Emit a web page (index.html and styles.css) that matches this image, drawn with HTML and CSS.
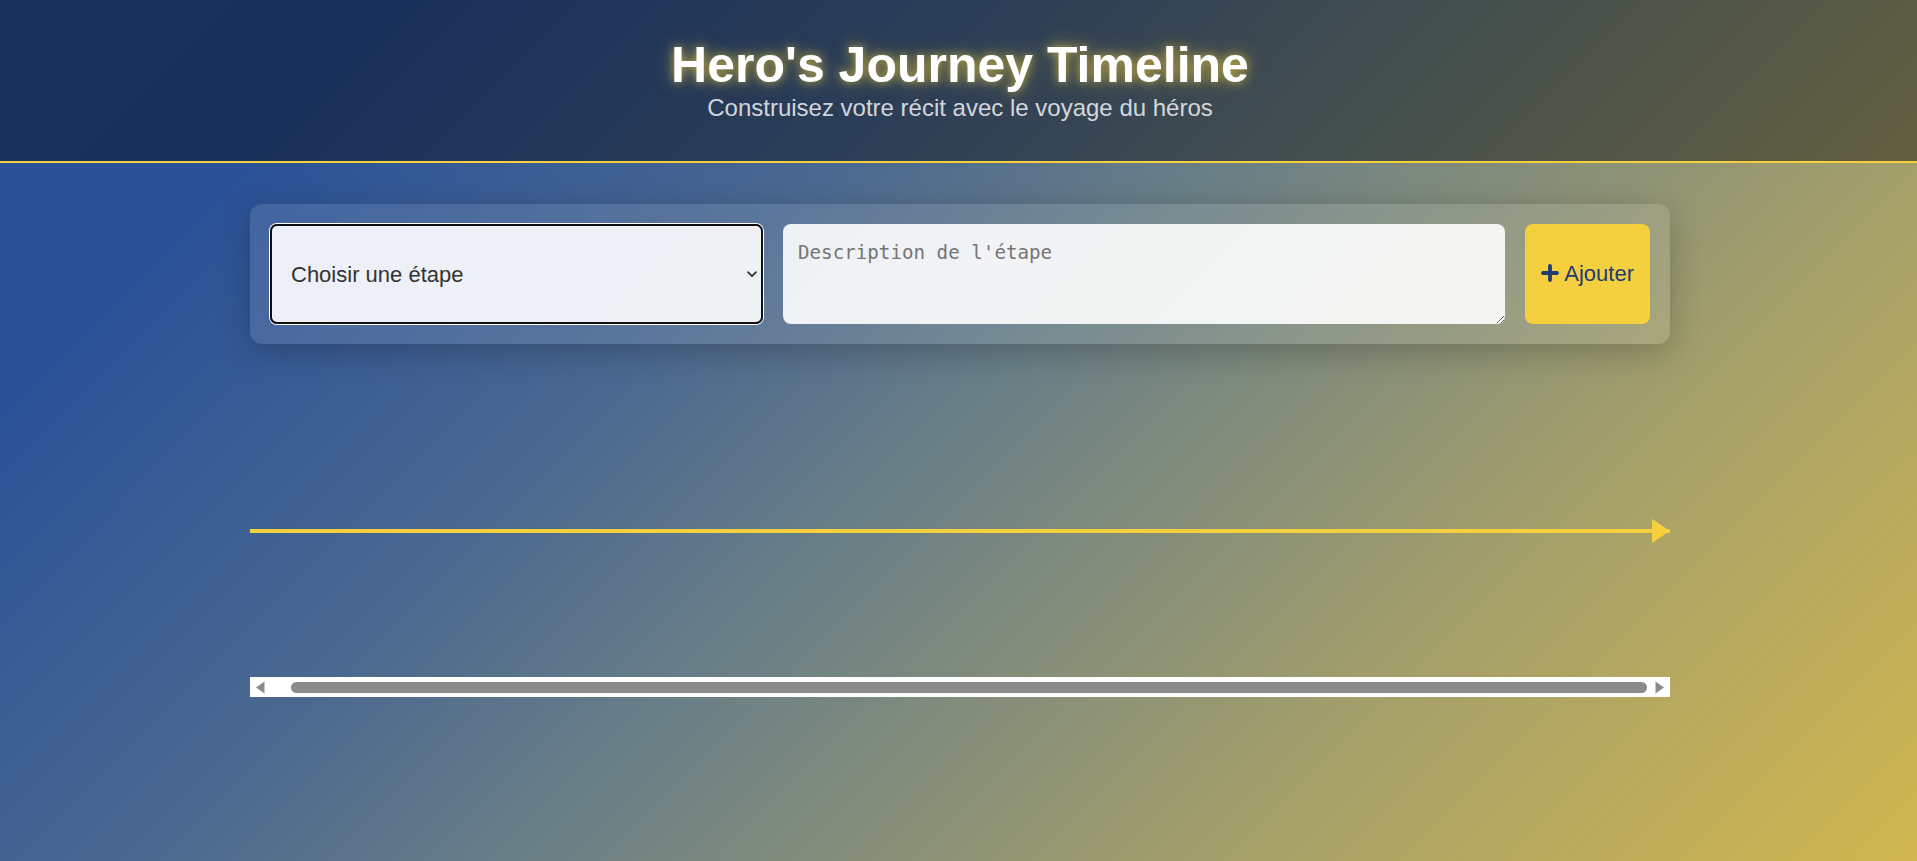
FILE: index.html
```html
<!DOCTYPE html>
<html lang="fr">
<head>
<meta charset="utf-8">
<title>Hero's Journey Timeline</title>
<link rel="stylesheet" href="styles.css">
</head>
<body>
<header class="hero-header">
  <h1 class="title">Hero's Journey Timeline</h1>
  <p class="subtitle">Construisez votre récit avec le voyage du héros</p>
</header>
<main class="container">
  <section class="stage-form">
    <div class="select-wrap">
      <select class="stage-select">
        <option>Choisir une étape</option>
        <option>Le monde ordinaire</option>
        <option>L'appel à l'aventure</option>
        <option>Le refus de l'appel</option>
        <option>La rencontre du mentor</option>
        <option>Le passage du seuil</option>
        <option>Épreuves, alliés et ennemis</option>
        <option>L'approche de la caverne</option>
        <option>L'épreuve suprême</option>
        <option>La récompense</option>
        <option>Le chemin du retour</option>
        <option>La résurrection</option>
        <option>Le retour avec l'élixir</option>
      </select>
      <svg class="select-chevron" width="10" height="7" viewBox="0 0 10 7" aria-hidden="true"><path d="M1 1.2l4 4 4-4" fill="none" stroke="#333" stroke-width="1.8" stroke-linecap="round" stroke-linejoin="round"/></svg>
    </div>
    <textarea class="stage-desc" placeholder="Description de l'étape"></textarea>
    <button class="add-btn" type="button">
      <svg class="plus-icon" width="18" height="18" viewBox="0 0 18 18" aria-hidden="true"><path d="M9 2v14M2 9h14" stroke="#1e3c72" stroke-width="3.8" stroke-linecap="round"/></svg>
      <span>Ajouter</span>
    </button>
  </section>
  <section class="timeline">
    <div class="timeline-track">
      <div class="timeline-line"></div>
    </div>
    <div class="timeline-scrollbar" aria-hidden="true">
      <div class="sb-btn">
        <svg width="17" height="20" viewBox="0 0 17 20"><polygon points="6,10.5 14.5,4.5 14.5,16.5" fill="#8b8b8b"/></svg>
      </div>
      <div class="sb-track">
        <div class="sb-thumb"></div>
      </div>
      <div class="sb-btn">
        <svg width="17" height="20" viewBox="0 0 17 20"><polygon points="2.5,4.5 2.5,16.5 11,10.5" fill="#8b8b8b"/></svg>
      </div>
    </div>
  </section>
</main>
</body>
</html>
```
FILE: styles.css
```css
html {
  height: 100%;
}

body {
  margin: 0;
  min-height: 100vh;
  font-family: "Liberation Sans", Arial, sans-serif;
  background: linear-gradient(135deg, #2a5298 0%, #2b5297 15%, #4a6890 36%, #6a7f86 50%, #a5a06a 75%, #d0b64e 100%);
}

.hero-header {
  background: rgba(0, 0, 0, 0.4);
  border-bottom: 2px solid #f4d03f;
  padding: 36px 17px 39px 20px;
  text-align: center;
}

.title {
  margin: 0;
  font-size: 50px;
  font-weight: 700;
  color: #fff;
  text-shadow: 0 0 10px rgba(244, 208, 63, 0.65), 0 0 20px rgba(244, 208, 63, 0.4);
}

.subtitle {
  margin: 0;
  font-size: 24px;
  color: rgba(255, 255, 255, 0.8);
}

.container {
  width: 1420px;
  margin-left: calc(50% - 708.5px);
  padding-top: 41px;
}

.stage-form {
  display: flex;
  gap: 20px;
  padding: 20px;
  background: rgba(255, 255, 255, 0.1);
  border-radius: 12px;
  box-shadow: 0 8px 32px rgba(0, 0, 0, 0.22);
}

.select-wrap {
  flex: 0 0 493px;
  position: relative;
}

.stage-select {
  appearance: none;
  -webkit-appearance: none;
  display: block;
  width: 100%;
  height: 100px;
  box-sizing: border-box;
  margin: 0;
  padding: 0 40px 0 19px;
  border: 2px solid #101010;
  border-radius: 7px;
  background: rgba(255, 255, 255, 0.9);
  box-shadow: 0 0 0 1px #fff;
  outline: none;
  font-family: "Liberation Sans", Arial, sans-serif;
  font-size: 22px;
  color: #333;
}

.select-chevron {
  position: absolute;
  right: 6px;
  top: 47px;
  pointer-events: none;
}

.stage-desc {
  flex: 1;
  height: 100px;
  box-sizing: border-box;
  margin: 0;
  padding: 17px 15px;
  border: none;
  border-radius: 8px;
  background: rgba(255, 255, 255, 0.9);
  font-family: "DejaVu Sans Mono", monospace;
  font-size: 19.2px;
  color: #333;
  resize: vertical;
  outline: none;
}

.stage-desc::placeholder {
  color: #757575;
}

.add-btn {
  flex: none;
  display: flex;
  align-items: center;
  gap: 5px;
  height: 100px;
  padding: 0 16px;
  border: none;
  border-radius: 8px;
  background: #f4d03f;
  color: #1e3c72;
  font-family: "Liberation Sans", Arial, sans-serif;
  font-size: 22px;
  cursor: pointer;
}

.plus-icon {
  display: block;
  margin-top: -2px;
}

.timeline {
  margin-top: 38px;
}

.timeline-track {
  height: 295px;
  box-sizing: border-box;
  padding-top: 3px;
  display: flex;
  align-items: center;
}

.timeline-line {
  flex: 1;
  height: 4px;
  background: #f4d03f;
  position: relative;
}

.timeline-line::after {
  content: "";
  position: absolute;
  right: 0;
  top: 50%;
  margin-top: -12px;
  border-left: 18px solid #f4d03f;
  border-top: 12px solid transparent;
  border-bottom: 12px solid transparent;
}

.timeline-scrollbar {
  display: flex;
  height: 20px;
  background: #fff;
}

.sb-btn {
  flex: 0 0 17px;
}

.sb-btn svg {
  display: block;
}

.sb-track {
  flex: 1;
  display: flex;
  align-items: center;
  padding: 0 6px 0 24px;
}

.sb-thumb {
  flex: 1;
  height: 11px;
  border-radius: 6px;
  background: #8b8b8b;
}
```
